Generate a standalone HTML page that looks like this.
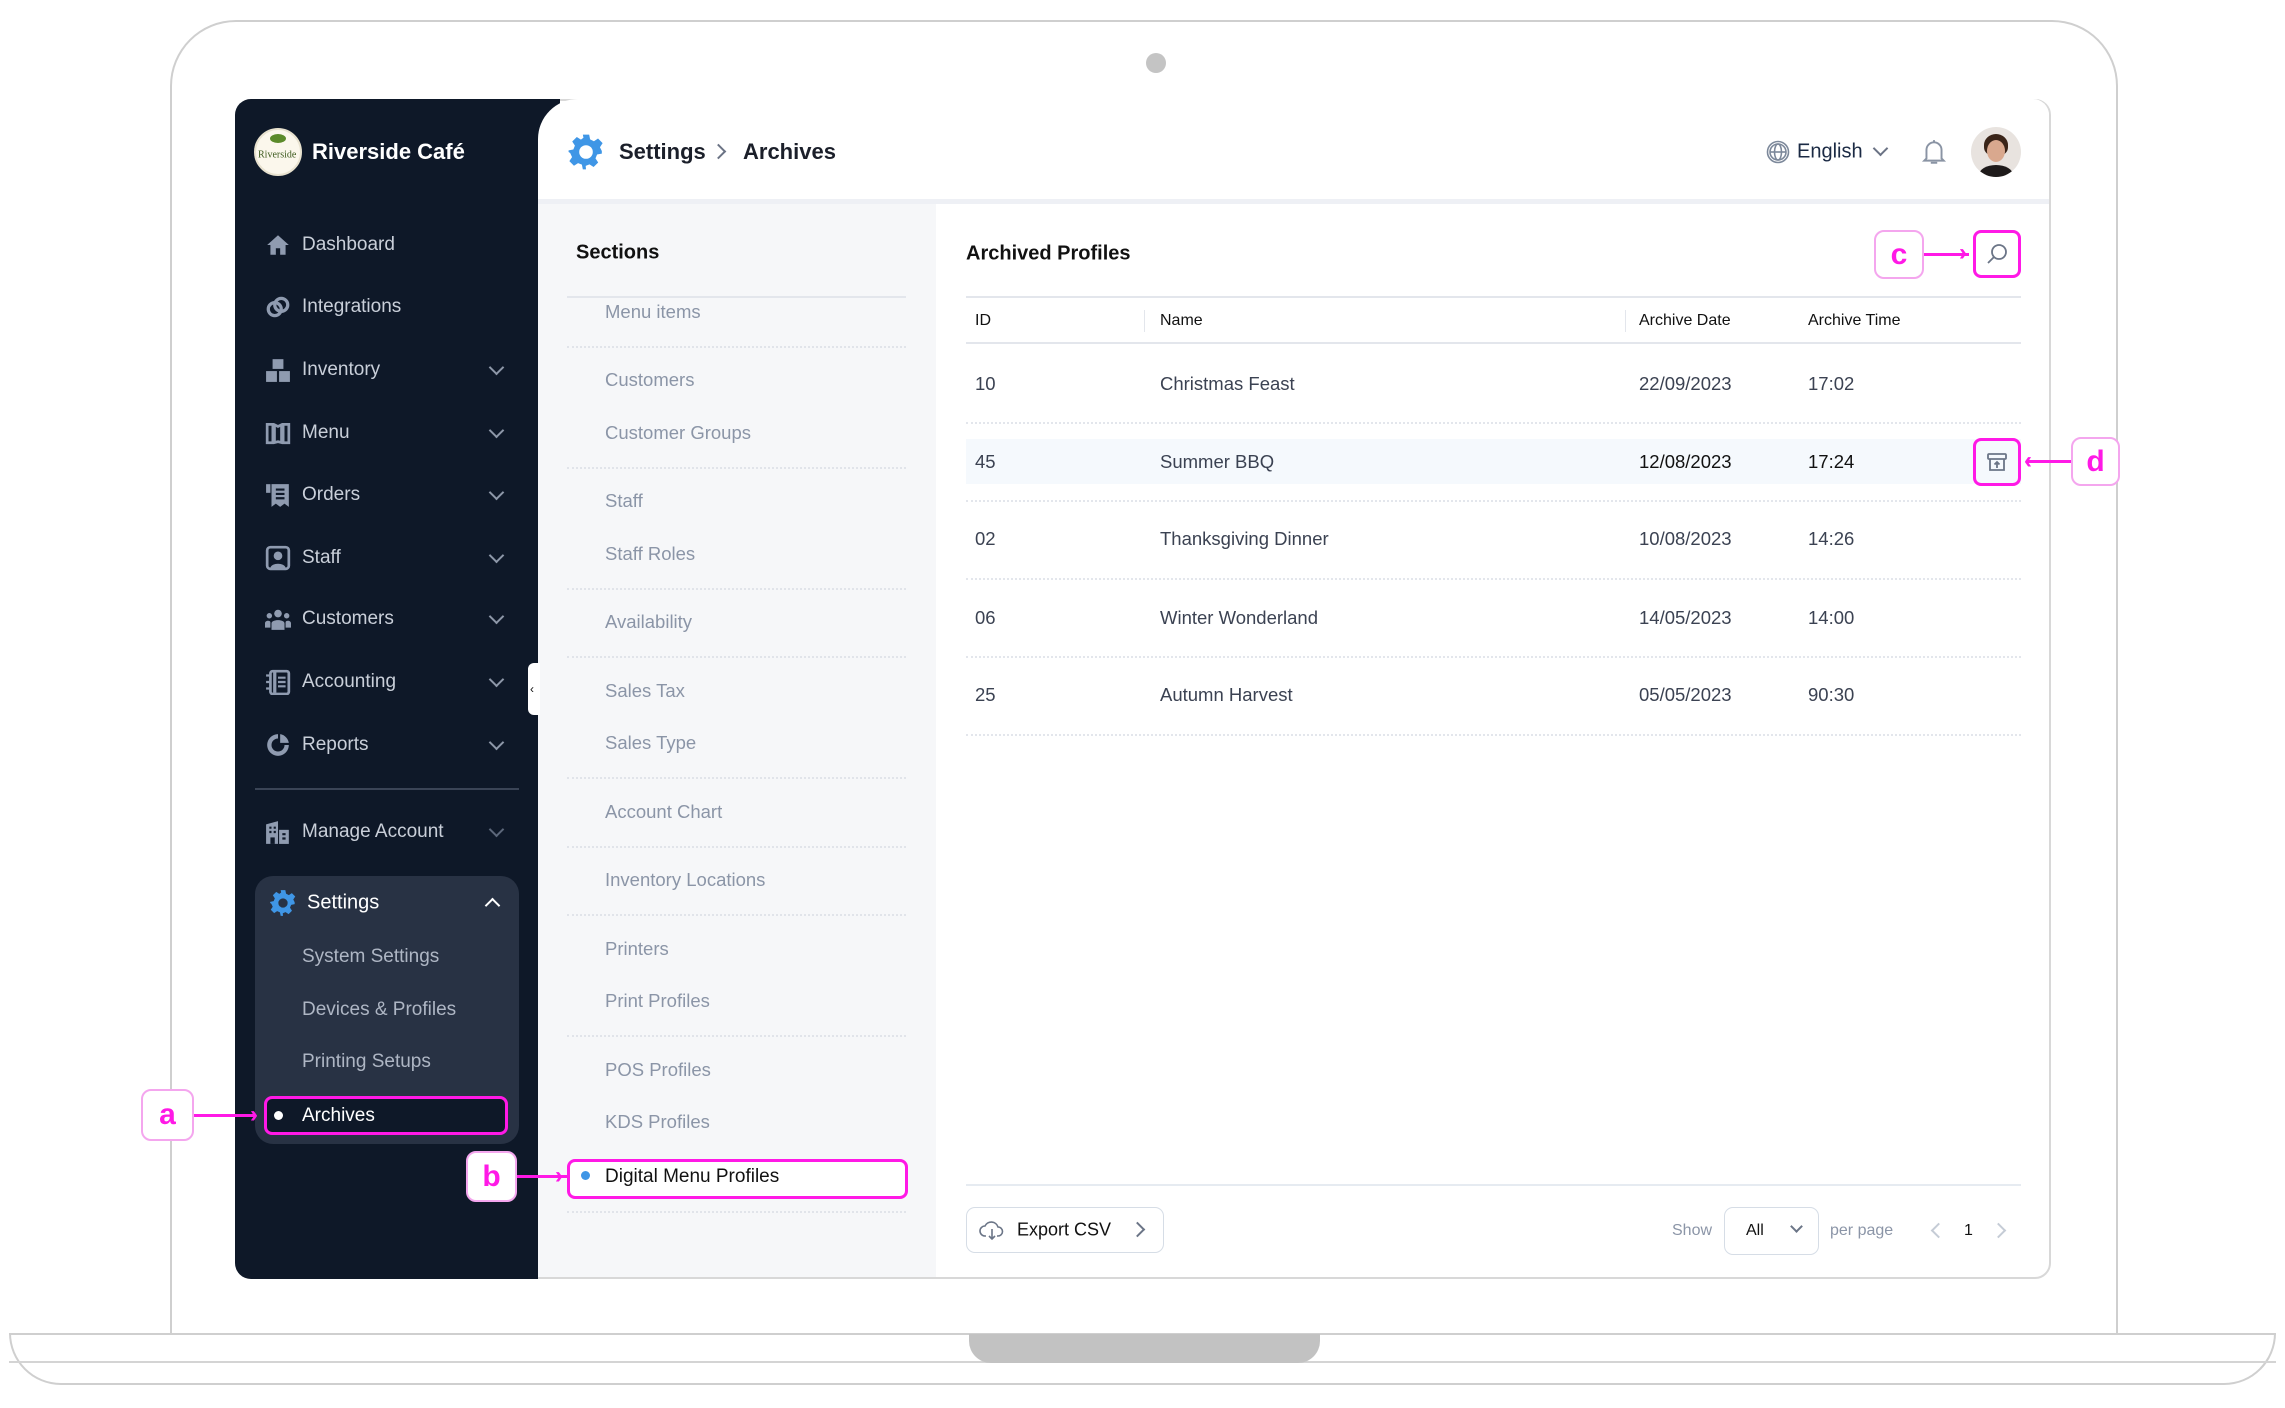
<!DOCTYPE html>
<html><head><meta charset="utf-8">
<style>
*{box-sizing:border-box;margin:0;padding:0}
body{width:2285px;height:1408px;background:#fff;position:relative;overflow:hidden;font-family:"Liberation Sans",sans-serif}
.a{position:absolute}
.t{position:absolute;white-space:nowrap;transform:translateY(-50%)}
.side{color:#c9cfd9;font-size:19px}
.sec{color:#8b95a7;font-size:18.5px;left:605px}
.dot{position:absolute;left:567px;width:339px;border-top:2px dotted #e1e4ea}
.rdot{position:absolute;left:966px;width:1055px;border-top:2px dotted #e3e6ec}
.cell{color:#3b4252;font-size:18.5px}
.chev{position:absolute;width:11px;height:11px;border-right:2px solid #8d97a8;border-bottom:2px solid #8d97a8;transform:rotate(45deg)}
.ic{position:absolute;width:26px;height:26px}
.lab{position:absolute;border:2.5px solid #f4a6ee;border-radius:10px;background:#fff;color:#ff19e6;font-weight:bold;font-size:30px;display:flex;align-items:center;justify-content:center}
.arr{position:absolute;height:3px;background:#ff19e6}
</style></head><body>
<div class="a" style="left:170px;top:20px;width:1948px;height:1340px;border:2px solid #cfcfcf;border-radius:66px 66px 0 0;border-bottom:none"></div>
<div class="a" style="left:1146px;top:53px;width:20px;height:20px;border-radius:50%;background:#c4c4c4"></div>
<div class="a" style="left:9px;top:1333px;width:2267px;height:52px;border:2px solid #cfcfcf;border-radius:0 0 60px 60px;background:#fff"></div>
<div class="a" style="left:9px;top:1333px;width:2267px;height:30px;border-bottom:2px solid #d4d4d4"></div>
<div class="a" style="left:969px;top:1334px;width:351px;height:29px;background:#c2c2c2;border-radius:0 0 22px 22px"></div>
<div class="a" style="left:235px;top:99px;width:1816px;height:1180px;border:2px solid #d8d8d8;border-radius:16px;background:#fff;overflow:hidden"></div>
<div class="a" style="left:235px;top:99px;width:303px;height:1180px;background:#0e1828;border-radius:16px 0 0 16px"></div>
<div class="a" style="left:538px;top:201px;width:398px;height:1076px;background:#f6f7f9"></div>
<div class="a" style="left:520px;top:99px;width:40px;height:102px;background:#0e1828"></div>
<div class="a" style="left:538px;top:99px;width:1511px;height:102px;background:#fff;border-radius:40px 16px 0 0"></div>
<div class="a" style="left:538px;top:199px;width:1511px;height:5px;background:#eef0f5"></div>
<div class="a" style="left:528px;top:663px;width:12px;height:52px;background:#fff;border-radius:6px 0 0 6px"></div>
<div class="t" style="left:530px;top:689px;font-size:12px;color:#111">‹</div>

<div class="a" style="left:254px;top:128px;width:48px;height:48px;border-radius:50%;background:#fbf7ec;border:2px solid #e8e2cf"></div>
<div class="t" style="left:258px;top:155px;font-family:'Liberation Serif',serif;font-size:10px;color:#3c5a1d">Riverside</div>
<div class="a" style="left:270px;top:134px;width:16px;height:9px;border-radius:50%;background:#5b8a2a"></div>
<div class="t" style="left:312px;top:152px;color:#fff;font-size:22px;font-weight:bold">Riverside Café</div>

<svg class="ic" style="left:265px;top:232px" viewBox="0 0 24 24"><path d="M2 12L12 3l10 9h-3v9h-5v-6h-4v6H5v-9z" fill="#8f9bb0"/></svg>
<div class="t side" style="left:302px;top:245px">Dashboard</div>
<svg class="ic" style="left:265px;top:294px" viewBox="0 0 24 24"><circle cx="9" cy="14" r="6" fill="none" stroke="#8f9bb0" stroke-width="3"/><circle cx="15" cy="10" r="6" fill="none" stroke="#8f9bb0" stroke-width="3"/></svg>
<div class="t side" style="left:302px;top:307px">Integrations</div>
<svg class="ic" style="left:265px;top:357px" viewBox="0 0 24 24"><rect x="7" y="2" width="10" height="9" fill="#8f9bb0"/><rect x="1" y="13" width="10" height="10" fill="#8f9bb0"/><rect x="13" y="13" width="10" height="10" fill="#8f9bb0"/></svg>
<div class="t side" style="left:302px;top:370px">Inventory</div>
<svg class="ic" style="left:265px;top:420px" viewBox="0 0 24 24"><path d="M2 4h6l4 2 4-2h6v17h-6l-4-1-4 1H2z" fill="none" stroke="#8f9bb0" stroke-width="2.5"/><path d="M8 5v15M16 5v15" stroke="#8f9bb0" stroke-width="4"/></svg>
<div class="t side" style="left:302px;top:433px">Menu</div>
<svg class="ic" style="left:265px;top:482px" viewBox="0 0 24 24"><rect x="1" y="2" width="4" height="8" fill="#8f9bb0"/><path d="M6 2h16v21l-4-3-4 3-4-3-4 3z" fill="#8f9bb0"/><path d="M10 7h8M10 11h8M10 15h8" stroke="#0e1828" stroke-width="2"/></svg>
<div class="t side" style="left:302px;top:495px">Orders</div>
<svg class="ic" style="left:265px;top:545px" viewBox="0 0 24 24"><rect x="2" y="2" width="20" height="20" rx="3" fill="none" stroke="#8f9bb0" stroke-width="2.5"/><circle cx="12" cy="10" r="4" fill="#8f9bb0"/><path d="M5 21c1-5 13-5 14 0" fill="#8f9bb0"/></svg>
<div class="t side" style="left:302px;top:558px">Staff</div>
<svg class="ic" style="left:265px;top:606px" viewBox="0 0 24 24"><circle cx="12" cy="7" r="3.5" fill="#8f9bb0"/><circle cx="4" cy="9" r="2.5" fill="#8f9bb0"/><circle cx="20" cy="9" r="2.5" fill="#8f9bb0"/><path d="M6 22v-6c0-4 12-4 12 0v6zM0 20v-4c0-3 5-3 5-1v5zM24 20v-4c0-3-5-3-5-1v5z" fill="#8f9bb0"/></svg>
<div class="t side" style="left:302px;top:619px">Customers</div>
<svg class="ic" style="left:265px;top:669px" viewBox="0 0 24 24"><rect x="5" y="2" width="17" height="21" rx="2" fill="none" stroke="#8f9bb0" stroke-width="2.5"/><path d="M9 3v19" stroke="#8f9bb0" stroke-width="3"/><path d="M12 8h7M12 12h7M12 16h7M1 6h4M1 12h4M1 18h4" stroke="#8f9bb0" stroke-width="2"/></svg>
<div class="t side" style="left:302px;top:682px">Accounting</div>
<svg class="ic" style="left:265px;top:732px" viewBox="0 0 24 24"><path d="M12 2a10 10 0 1 0 10 10h-4a6 6 0 1 1-6-6z" fill="#8f9bb0"/><path d="M14 2a10 10 0 0 1 8 8h-8z" fill="#8f9bb0"/></svg>
<div class="t side" style="left:302px;top:745px">Reports</div>
<div class="chev" style="left:491px;top:362px"></div>
<div class="chev" style="left:491px;top:425px"></div>
<div class="chev" style="left:491px;top:487px"></div>
<div class="chev" style="left:491px;top:550px"></div>
<div class="chev" style="left:491px;top:611px"></div>
<div class="chev" style="left:491px;top:674px"></div>
<div class="chev" style="left:491px;top:737px"></div>
<div class="a" style="left:255px;top:788px;width:264px;height:2px;background:#3a4456"></div>
<svg class="ic" style="left:265px;top:819px" viewBox="0 0 24 24"><path d="M1 23V5l11-3v21z" fill="#8f9bb0"/><path d="M13 10h9v13h-9z" fill="#8f9bb0"/><path d="M4 8h2M8 8h2M4 12h2M8 12h2M16 14h3M16 18h3" stroke="#0e1828" stroke-width="2"/><rect x="5" y="17" width="4" height="6" fill="#0e1828"/></svg>
<div class="t side" style="left:302px;top:832px">Manage Account</div>
<div class="chev" style="left:491px;top:824px;border-color:#5c677a"></div>

<div class="a" style="left:255px;top:876px;width:264px;height:268px;background:#283244;border-radius:18px"></div>
<svg class="a" style="left:269px;top:889px;width:28px;height:28px" viewBox="0 0 24 24"><path d="M10 1h4l.6 3 2.4 1.2 2.6-1.7 2.9 2.9-1.7 2.6L22 11.4V13l-3 .6-1 2.4 1.7 2.6-2.9 2.9-2.6-1.7-2.4 1L12 23h-2l-.6-3-2.4-1-2.6 1.7-2.9-2.9L3.2 15.2 2 12.6 1 12v-1l3-.6L5 8 3.3 5.4l2.9-2.9L8.8 4.2 10.4 3z" fill="#3f96e6"/><circle cx="12" cy="12" r="4" fill="#283244"/></svg>
<div class="t" style="left:307px;top:903px;color:#fff;font-size:20px">Settings</div>
<div class="chev" style="left:487px;top:900px;border-color:#fff;transform:rotate(-135deg)"></div>
<div class="t side" style="left:302px;top:957px;color:#aeb6c4">System Settings</div>
<div class="t side" style="left:302px;top:1010px;color:#aeb6c4">Devices &amp; Profiles</div>
<div class="t side" style="left:302px;top:1062px;color:#aeb6c4">Printing Setups</div>
<div class="a" style="left:264px;top:1096px;width:244px;height:39px;background:#0e1828;border:3px solid #ff19e6;border-radius:8px"></div>
<div class="a" style="left:274px;top:1111px;width:9px;height:9px;border-radius:50%;background:#fff"></div>
<div class="t" style="left:302px;top:1116px;color:#fff;font-size:19px">Archives</div>
<div class="lab" style="left:141px;top:1089px;width:53px;height:52px">a</div>
<div class="arr" style="left:194px;top:1114px;width:60px"></div>
<div class="t" style="left:250px;top:1115px;color:#ff19e6;font-size:24px;font-weight:bold">›</div>

<svg class="a" style="left:567px;top:133px;width:38px;height:38px" viewBox="0 0 24 24"><path d="M10 1h4l.6 3 2.4 1.2 2.6-1.7 2.9 2.9-1.7 2.6L22 11.4V13l-3 .6-1 2.4 1.7 2.6-2.9 2.9-2.6-1.7-2.4 1L12 23h-2l-.6-3-2.4-1-2.6 1.7-2.9-2.9L3.2 15.2 2 12.6 1 12v-1l3-.6L5 8 3.3 5.4l2.9-2.9L8.8 4.2 10.4 3z" fill="#3f96e6"/><circle cx="12" cy="12" r="4.3" fill="#fff"/></svg>
<div class="t" style="left:619px;top:152px;color:#1b1f2a;font-size:22px;font-weight:bold">Settings</div>
<div class="chev" style="left:713px;top:146px;transform:rotate(-45deg);border-color:#6b7385"></div>
<div class="t" style="left:743px;top:152px;color:#1b1f2a;font-size:22px;font-weight:bold">Archives</div>
<svg class="a" style="left:1766px;top:140px;width:24px;height:24px" viewBox="0 0 24 24" fill="none" stroke="#7c889a" stroke-width="1.6"><circle cx="12" cy="12" r="10.5"/><circle cx="12" cy="12" r="8"/><ellipse cx="12" cy="12" rx="3.5" ry="8"/><path d="M4 12h16"/></svg>
<div class="t" style="left:1797px;top:152px;color:#1b2a44;font-size:20px">English</div>
<div class="chev" style="left:1875px;top:143px;border-color:#6b7385"></div>
<svg class="a" style="left:1921px;top:138px;width:26px;height:28px" viewBox="0 0 24 26" fill="none" stroke="#8a94a4" stroke-width="1.8"><path d="M12 2v2M5 19v-8a7 7 0 0 1 14 0v8l2 2H3z"/><path d="M9 23h6"/></svg>
<div class="a" style="left:1971px;top:127px;width:50px;height:50px;border-radius:50%;background:#e8e3df;overflow:hidden">
<div class="a" style="left:13px;top:7px;width:24px;height:22px;border-radius:50% 50% 40% 40%;background:#3a2418"></div>
<div class="a" style="left:16px;top:13px;width:18px;height:22px;border-radius:50%;background:#d9a88e"></div>
<div class="a" style="left:8px;top:38px;width:34px;height:20px;border-radius:50% 50% 0 0;background:#1e1a1a"></div>
</div>

<div class="t" style="left:576px;top:253px;color:#111;font-size:20px;font-weight:bold">Sections</div>
<div class="a" style="left:567px;top:296px;width:339px;height:2px;background:#e3e6ec"></div>
<div class="t sec" style="top:312px">Menu items</div>
<div class="dot" style="top:346px"></div>
<div class="t sec" style="top:380px">Customers</div>
<div class="t sec" style="top:433px">Customer Groups</div>
<div class="dot" style="top:467px"></div>
<div class="t sec" style="top:501px">Staff</div>
<div class="t sec" style="top:554px">Staff Roles</div>
<div class="dot" style="top:588px"></div>
<div class="t sec" style="top:622px">Availability</div>
<div class="dot" style="top:656px"></div>
<div class="t sec" style="top:691px">Sales Tax</div>
<div class="t sec" style="top:743px">Sales Type</div>
<div class="dot" style="top:777px"></div>
<div class="t sec" style="top:812px">Account Chart</div>
<div class="dot" style="top:846px"></div>
<div class="t sec" style="top:880px">Inventory Locations</div>
<div class="dot" style="top:914px"></div>
<div class="t sec" style="top:949px">Printers</div>
<div class="t sec" style="top:1001px">Print Profiles</div>
<div class="dot" style="top:1035px"></div>
<div class="t sec" style="top:1070px">POS Profiles</div>
<div class="t sec" style="top:1122px">KDS Profiles</div>
<div class="a" style="left:567px;top:1159px;width:341px;height:40px;background:#fff;border:3px solid #ff19e6;border-radius:8px"></div>
<div class="a" style="left:581px;top:1171px;width:9px;height:9px;border-radius:50%;background:#3f96e6"></div>
<div class="t" style="left:605px;top:1177px;color:#111;font-size:19px">Digital Menu Profiles</div>
<div class="dot" style="top:1211px"></div>
<div class="lab" style="left:466px;top:1151px;width:51px;height:51px">b</div>
<div class="arr" style="left:517px;top:1175px;width:50px"></div>
<div class="t" style="left:555px;top:1176px;color:#ff19e6;font-size:24px;font-weight:bold">›</div>

<div class="t" style="left:966px;top:254px;color:#111;font-size:20px;font-weight:bold">Archived Profiles</div>
<div class="a" style="left:1973px;top:230px;width:48px;height:48px;border:3px solid #ff19e6;border-radius:8px"></div>
<svg class="a" style="left:1985px;top:242px;width:24px;height:24px" viewBox="0 0 24 24" fill="none" stroke="#6b7587" stroke-width="1.8"><circle cx="14" cy="10" r="7"/><path d="M9 15l-6 6"/></svg>
<div class="lab" style="left:1874px;top:230px;width:50px;height:49px">c</div>
<div class="arr" style="left:1924px;top:253px;width:45px"></div>
<div class="t" style="left:1959px;top:253px;color:#ff19e6;font-size:24px;font-weight:bold">›</div>
<div class="a" style="left:966px;top:296px;width:1055px;height:2px;background:#e3e6ec"></div>
<div class="t" style="left:975px;top:321px;color:#111;font-size:16px">ID</div>
<div class="t" style="left:1160px;top:321px;color:#111;font-size:16px">Name</div>
<div class="t" style="left:1639px;top:321px;color:#111;font-size:16px">Archive Date</div>
<div class="t" style="left:1808px;top:321px;color:#111;font-size:16px">Archive Time</div>
<div class="a" style="left:1144px;top:310px;width:1px;height:22px;background:#e3e6ec"></div>
<div class="a" style="left:1625px;top:310px;width:1px;height:22px;background:#e3e6ec"></div>
<div class="a" style="left:966px;top:342px;width:1055px;height:2px;background:#e3e6ec"></div>

<div class="t cell" style="left:975px;top:384px">10</div><div class="t cell" style="left:1160px;top:384px">Christmas Feast</div><div class="t cell" style="left:1639px;top:384px">22/09/2023</div><div class="t cell" style="left:1808px;top:384px">17:02</div>
<div class="rdot" style="top:422px"></div>
<div class="a" style="left:966px;top:439px;width:1055px;height:45px;background:#f5f9fd"></div>
<div class="t cell" style="left:975px;top:462px">45</div><div class="t cell" style="left:1160px;top:462px">Summer BBQ</div><div class="t cell" style="left:1639px;top:462px;color:#111">12/08/2023</div><div class="t cell" style="left:1808px;top:462px;color:#111">17:24</div>
<div class="a" style="left:1973px;top:438px;width:48px;height:48px;border:3px solid #ff19e6;border-radius:8px"></div>
<svg class="a" style="left:1985px;top:450px;width:24px;height:24px" viewBox="0 0 24 24" fill="none" stroke="#6b7587" stroke-width="1.8"><rect x="3" y="4" width="18" height="5" rx="1"/><path d="M5 9v11h14V9M12 18v-6M9.5 14.5 12 12l2.5 2.5"/></svg>
<div class="lab" style="left:2071px;top:437px;width:49px;height:49px">d</div>
<div class="arr" style="left:2027px;top:460px;width:44px"></div>
<div class="t" style="left:2024px;top:461px;color:#ff19e6;font-size:24px;font-weight:bold">‹</div>
<div class="rdot" style="top:500px"></div>
<div class="t cell" style="left:975px;top:539px">02</div><div class="t cell" style="left:1160px;top:539px">Thanksgiving Dinner</div><div class="t cell" style="left:1639px;top:539px">10/08/2023</div><div class="t cell" style="left:1808px;top:539px">14:26</div>
<div class="rdot" style="top:578px"></div>
<div class="t cell" style="left:975px;top:618px">06</div><div class="t cell" style="left:1160px;top:618px">Winter Wonderland</div><div class="t cell" style="left:1639px;top:618px">14/05/2023</div><div class="t cell" style="left:1808px;top:618px">14:00</div>
<div class="rdot" style="top:656px"></div>
<div class="t cell" style="left:975px;top:695px">25</div><div class="t cell" style="left:1160px;top:695px">Autumn Harvest</div><div class="t cell" style="left:1639px;top:695px">05/05/2023</div><div class="t cell" style="left:1808px;top:695px">90:30</div>
<div class="rdot" style="top:734px"></div>

<div class="a" style="left:966px;top:1184px;width:1055px;height:2px;background:#e6ebf1"></div>
<div class="a" style="left:966px;top:1207px;width:198px;height:46px;border:1.5px solid #d6dde6;border-radius:9px"></div>
<svg class="a" style="left:979px;top:1218px;width:26px;height:24px" viewBox="0 0 26 24" fill="none" stroke="#6b7587" stroke-width="1.6"><path d="M7 18H6a5 5 0 0 1 0-10 7 7 0 0 1 13 1 4.5 4.5 0 0 1 0 9h-1"/><path d="M13 11v10M10 18l3 3 3-3"/></svg>
<div class="t" style="left:1017px;top:1230px;color:#111;font-size:18px">Export CSV</div>
<div class="chev" style="left:1132px;top:1224px;transform:rotate(-45deg);border-color:#6b7587"></div>
<div class="t" style="left:1672px;top:1231px;color:#8b95a7;font-size:16px">Show</div>
<div class="a" style="left:1724px;top:1207px;width:95px;height:48px;border:1.5px solid #d6dde6;border-radius:9px"></div>
<div class="t" style="left:1746px;top:1231px;color:#111;font-size:16px">All</div>
<div class="chev" style="left:1792px;top:1222px;width:9px;height:9px;border-color:#6b7587"></div>
<div class="t" style="left:1830px;top:1231px;color:#8b95a7;font-size:16px">per page</div>
<div class="chev" style="left:1933px;top:1225px;transform:rotate(135deg);border-color:#c5ccd6"></div>
<div class="t" style="left:1964px;top:1231px;color:#111;font-size:16px">1</div>
<div class="chev" style="left:1993px;top:1225px;transform:rotate(-45deg);border-color:#c5ccd6"></div>
</body></html>
